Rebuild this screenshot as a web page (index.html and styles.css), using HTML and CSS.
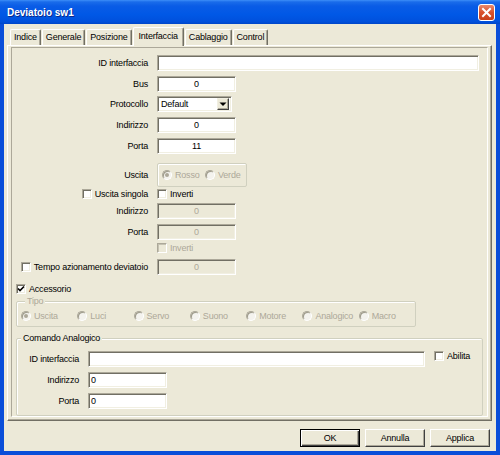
FILE: index.html
```html
<!DOCTYPE html>
<html lang="it">
<head>
    <meta charset="UTF-8">
    <title>Deviatoio sw1</title>
    <link rel="stylesheet" href="styles.css">
</head>
<body>
<div class="window">
    <div class="titlebar">
        <span class="title">Deviatoio sw1</span>
        <span class="close-btn">
            <svg width="15" height="15" viewBox="0 0 15 15"><path d="M4 4 L11 11 M11 4 L4 11" stroke="#fff" stroke-width="2" stroke-linecap="square"/></svg>
        </span>
    </div>
    <div class="frame">
        <div class="tabs">
            <span class="tab">Indice</span>
            <span class="tab">Generale</span>
            <span class="tab">Posizione</span>
            <span class="tab active">Interfaccia</span>
            <span class="tab">Cablaggio</span>
            <span class="tab">Control</span>
        </div>
        <div class="panel">
            <div class="page">
                <div class="row">
                    <span class="lbl">ID interfaccia</span>
                    <span class="field wide"></span>
                </div>
                <div class="row">
                    <span class="lbl">Bus</span>
                    <span class="field num">0</span>
                </div>
                <div class="row tight">
                    <span class="lbl">Protocollo</span>
                    <span class="select">
                        <span class="select-text">Default</span>
                        <span class="drop"><svg width="10" height="12" viewBox="0 0 10 12"><path d="M1.5 4.5 H8.5 L5 8 Z" fill="#000"/></svg></span>
                    </span>
                </div>
                <div class="row">
                    <span class="lbl">Indirizzo</span>
                    <span class="field num">0</span>
                </div>
                <div class="row">
                    <span class="lbl">Porta</span>
                    <span class="field num">11</span>
                </div>
                <div class="row row-group">
                    <span class="lbl">Uscita</span>
                    <span class="box uscita">
                        <span class="opt disabled opt-rosso"><span class="rb on"></span>Rosso</span>
                        <span class="opt disabled"><span class="rb"></span>Verde</span>
                    </span>
                </div>
                <div class="row row-check">
                    <span class="lbl"><span class="cb"></span>Uscita singola</span>
                    <span class="opt"><span class="cb"></span>Inverti</span>
                </div>
                <div class="row after-check">
                    <span class="lbl">Indirizzo</span>
                    <span class="field num disabled">0</span>
                </div>
                <div class="row">
                    <span class="lbl">Porta</span>
                    <span class="field num disabled">0</span>
                </div>
                <div class="row row-check2">
                    <span class="lbl"></span>
                    <span class="opt disabled"><span class="cb"></span>Inverti</span>
                </div>
                <div class="row">
                    <span class="lbl"><span class="cb"></span>Tempo azionamento deviatoio</span>
                    <span class="field num disabled">0</span>
                </div>
                <div class="row row-acc">
                    <span class="opt">
                        <span class="cb"><svg width="8" height="8" viewBox="0 0 8 8"><path d="M1 3.5 L3 5.5 L7 1.5" stroke="#000" stroke-width="1.6" fill="none"/></svg></span>
                        Accessorio
                    </span>
                </div>

                <fieldset class="group tipo">
                    <legend class="disabled">Tipo</legend>
                    <div class="radios">
                        <span class="opt disabled"><span class="rb on"></span>Uscita</span>
                        <span class="opt disabled"><span class="rb"></span>Luci</span>
                        <span class="opt disabled"><span class="rb"></span>Servo</span>
                        <span class="opt disabled"><span class="rb"></span>Suono</span>
                        <span class="opt disabled"><span class="rb"></span>Motore</span>
                        <span class="opt disabled"><span class="rb"></span>Analogico</span>
                        <span class="opt disabled"><span class="rb"></span>Macro</span>
                    </div>
                </fieldset>

                <fieldset class="group comando">
                    <legend>Comando Analogico</legend>
                    <div class="crow first">
                        <span class="clbl">ID interfaccia</span>
                        <span class="field cwide"></span>
                        <span class="opt abilita"><span class="cb"></span>Abilita</span>
                    </div>
                    <div class="crow">
                        <span class="clbl">Indirizzo</span>
                        <span class="field cnum">0</span>
                    </div>
                    <div class="crow">
                        <span class="clbl">Porta</span>
                        <span class="field cnum">0</span>
                    </div>
                </fieldset>
            </div>
        </div>
        <div class="buttons">
            <span class="btn default">OK</span>
            <span class="btn">Annulla</span>
            <span class="btn">Applica</span>
        </div>
    </div>
</div>
</body>
</html>
```

FILE: styles.css
```css
body {
    margin: 0;
    font-family: "Liberation Sans", Arial, sans-serif;
    font-size: 9px;
    letter-spacing: -0.2px;
    color: #000;
}
.window {
    width: 500px;
    height: 455px;
    background: #ece9d8;
    display: flex;
    flex-direction: column;
}
.titlebar {
    height: 24px;
    flex: none;
    display: flex;
    align-items: center;
    justify-content: space-between;
    padding: 0 5px 0 7px;
    background: linear-gradient(to bottom, #3d8ef8 0%, #1a6cea 8%, #0a5ce6 25%, #0058e6 60%, #0050dc 90%, #0046c8 100%);
}
.title {
    color: #fff;
    font-weight: bold;
    font-size: 10px;
    letter-spacing: 0;
    text-shadow: 1px 1px #0a2a8c;
}
.close-btn {
    width: 17px;
    height: 17px;
    box-sizing: border-box;
    border: 1px solid #fff;
    border-radius: 3px;
    background: linear-gradient(to bottom, #e88a6c, #d8512c 50%, #c8401a);
    display: flex;
    align-items: center;
    justify-content: center;
}
.frame {
    flex: 1;
    border: 4px solid #0a4ed9;
    border-top: 0;
    padding-top: 3px;
    display: flex;
    flex-direction: column;
}

/* tabs */
.tabs {
    display: flex;
    align-items: flex-end;
    height: 18px;
    margin-left: 6px;
    position: relative;
    z-index: 1;
}
.tab {
    height: 16px;
    box-sizing: border-box;
    padding: 0 3px;
    margin-right: 1px;
    line-height: 15px;
    border: 1px solid;
    border-bottom: 0;
    border-color: #fff #716f64 #fff #fff;
    border-radius: 2px 2px 0 0;
    box-shadow: inset -1px 0 #aca899;
}
.tab.active {
    height: 19px;
    margin-bottom: -1px;
    padding: 0 5px;
    line-height: 17px;
    background: #ece9d8;
}
.panel {
    height: 376px;
    box-sizing: border-box;
    margin: 0 4px 0 3px;
    border: 1px solid;
    border-color: #fff #716f64 #716f64 #fff;
    box-shadow: inset -1px -1px #aca899;
    display: flex;
}
.page {
    flex: 1;
    margin: 1px 3px 3px 3px;
    border: 1px solid;
    border-color: #aca899 #fff #fff #aca899;
    padding-top: 7px;
    display: flex;
    flex-direction: column;
}

/* rows */
.row {
    display: flex;
    align-items: center;
    height: 16px;
    margin-top: 5px;
    flex: none;
}
.row:first-child { margin-top: 0; }
.row.tight { margin-top: 4px; }
.row.row-group { height: 24px; margin-top: 9px; }
.row.row-check { height: 12px; margin-top: 1px; }
.row.after-check { margin-top: 3px; }
.row.row-check2 { height: 12px; margin-top: 2px; }
.row.row-acc { height: 12px; margin-top: 8px; padding-left: 4px; }
.lbl {
    width: 136px;
    margin-right: 9px;
    flex: none;
    display: flex;
    justify-content: flex-end;
    align-items: center;
    white-space: nowrap;
}
.lbl .cb { margin-right: 3px; }

.field {
    height: 16px;
    box-sizing: border-box;
    border: 1px solid;
    border-color: #aca899 #fff #fff #aca899;
    box-shadow: inset 1px 1px #716f64, inset -1px -1px #f1efe2;
    background: #fff;
    display: flex;
    align-items: center;
    justify-content: center;
}
.field.wide { width: 322px; }
.field.num { width: 79px; }
.field.disabled {
    background: #ece9d8;
    color: #aca899;
}

.select {
    width: 75px;
    height: 16px;
    box-sizing: border-box;
    border: 1px solid;
    border-color: #aca899 #fff #fff #aca899;
    box-shadow: inset 1px 1px #716f64, inset -1px -1px #f1efe2;
    background: #fff;
    display: flex;
    align-items: center;
    padding: 2px 2px 2px 3px;
}
.select-text { flex: 1; }
.drop {
    width: 12px;
    height: 12px;
    box-sizing: border-box;
    background: #ece9d8;
    border: 1px solid;
    border-color: #f1efe2 #404040 #404040 #f1efe2;
    box-shadow: inset -1px -1px #aca899;
    display: flex;
    align-items: center;
    justify-content: center;
}

/* checkboxes and radios */
.opt {
    display: flex;
    align-items: center;
    white-space: nowrap;
}
.opt .cb, .opt .rb { margin-right: 3px; }
.opt.disabled { color: #aca899; }
.cb {
    width: 10px;
    height: 10px;
    box-sizing: border-box;
    flex: none;
    background: #fff;
    border: 1px solid;
    border-color: #aca899 #fff #fff #aca899;
    box-shadow: inset 1px 1px #716f64, inset -1px -1px #f1efe2;
    display: flex;
    align-items: center;
    justify-content: center;
}
.opt.disabled .cb { background: #ece9d8; box-shadow: inset 1px 1px #c5c2b2; }
.rb {
    width: 10px;
    height: 10px;
    box-sizing: border-box;
    flex: none;
    border-radius: 50%;
    background: #f4f3ee;
    border: 1px solid;
    border-color: #aca899 #fff #fff #aca899;
    box-shadow: inset 1px 1px #9d9a8a;
    display: flex;
    align-items: center;
    justify-content: center;
}
.rb.on::after {
    content: "";
    width: 4px;
    height: 4px;
    border-radius: 50%;
    background: #aca899;
}

/* group boxes */
.box, .group {
    border: 1px solid #d0d0bf;
    border-radius: 2px;
    box-shadow: inset 1px 1px #fff;
}
.box.uscita {
    width: 90px;
    height: 24px;
    box-sizing: border-box;
    display: flex;
    align-items: center;
    padding-left: 4px;
}
.opt-rosso { width: 43px; }
.group {
    margin: 0 0 0 4px;
    padding: 0;
    min-inline-size: 0;
    box-sizing: border-box;
}
.group legend {
    margin-left: 4px;
    padding: 0 2px;
    line-height: 10px;
    background: #ece9d8;
}
.group legend.disabled { color: #aca899; }
.tipo {
    width: 400px;
    margin-top: 1px;
    padding: 0 0 4px 4px;
}
.radios {
    display: flex;
    height: 12px;
    margin-top: 4px;
}
.radios .opt { width: 56.7px; }
.comando {
    width: 467px;
    margin-top: 6px;
    padding-bottom: 6px;
}
.crow {
    display: flex;
    align-items: center;
    height: 16px;
    margin-top: 5px;
}
.crow.first { margin-top: 8px; }
.clbl {
    width: 62px;
    margin-right: 9px;
    text-align: right;
    white-space: nowrap;
}
.field.cwide { width: 337px; }
.field.cnum {
    width: 79px;
    justify-content: flex-start;
    padding-left: 2px;
}
.abilita {
    align-self: flex-start;
    margin-left: 9px;
    height: 10px;
}

/* buttons */
.buttons {
    display: flex;
    justify-content: flex-end;
    gap: 5px;
    margin: 8px 6px 0 0;
}
.btn {
    width: 60px;
    height: 18px;
    box-sizing: border-box;
    border: 1px solid;
    border-color: #fff #404040 #404040 #fff;
    box-shadow: inset -1px -1px #aca899;
    display: flex;
    align-items: center;
    justify-content: center;
}
.btn.default {
    border: 1px solid #000;
    box-shadow: inset 1px 1px #fff, inset -1px -1px #404040, inset -2px -2px #aca899;
}
```
